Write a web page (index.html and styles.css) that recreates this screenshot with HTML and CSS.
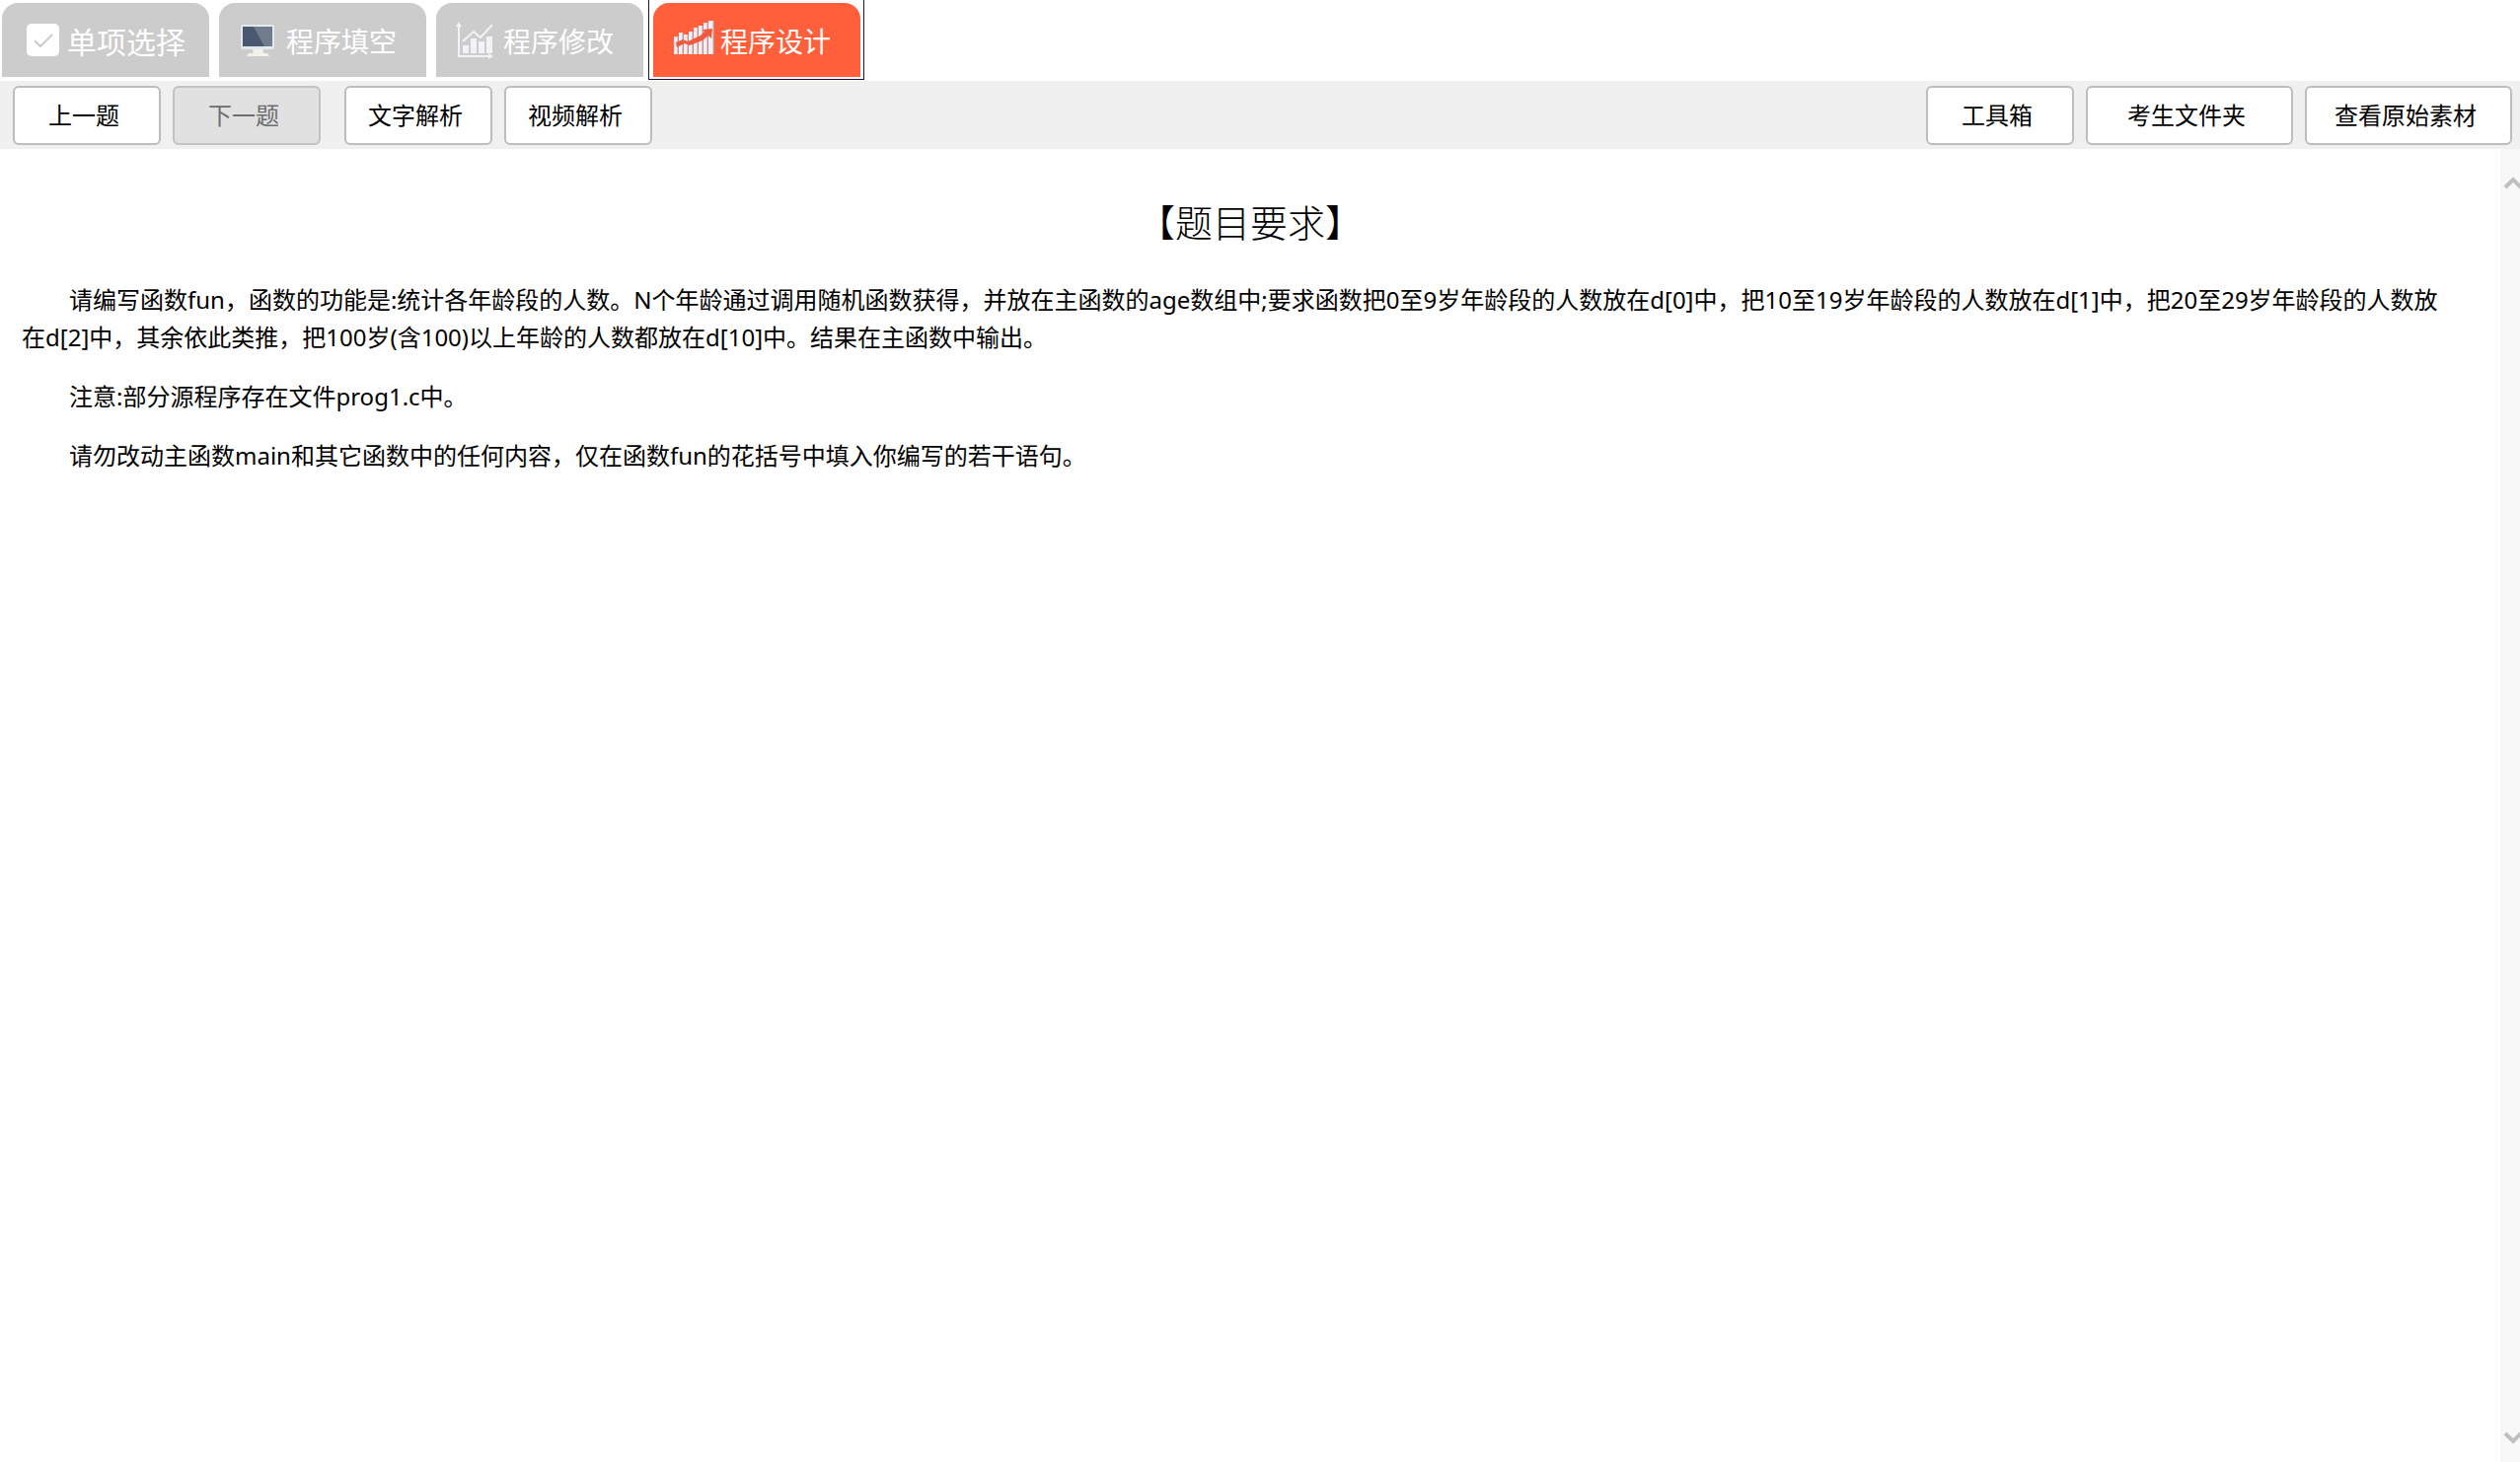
FILE: index.html
```html
<!DOCTYPE html>
<html lang="zh-CN">
<head>
<meta charset="utf-8">
<meta name="viewport" content="width=device-width, initial-scale=1">
<title>程序设计</title>
<link rel="stylesheet" href="styles.css">
</head>
<body>
<nav class="tabs">
  <button class="tab tab-wide" type="button">
    <svg class="tab-icon" viewBox="0 0 42 42" aria-hidden="true"><rect x="5" y="4" width="33" height="33" rx="5" fill="#fff"/><path d="M13 21l6 6 12-12" fill="none" stroke="#ccc" stroke-width="2"/></svg>
    <span>单项选择</span>
  </button>
  <button class="tab" type="button">
    <svg class="tab-icon" viewBox="0 0 42 42" aria-hidden="true"><path d="M15 28h9l1 6h4l2 3H8l2-3h4z" fill="#f4f3ea"/><rect x="2" y="5" width="34" height="25" rx="2" fill="#e3eaee"/><rect x="4" y="7" width="30" height="20" fill="#4a5871"/><path d="M15 7h19v20h-8z" fill="#707b8d"/></svg>
    <span>程序填空</span>
  </button>
  <button class="tab" type="button">
    <svg class="tab-icon" viewBox="0 0 42 42" aria-hidden="true"><g fill="none" stroke="#f3f3f7" stroke-width="2"><path d="M3 5v32h33M7 22l11-10 7 6 12-13"/></g><path d="M3 2l3 5H0zM38 37l-5-3v6zM7 26h6v8H7zM15 19h6v15h-6zM23 22h6v12h-6zM31 17h6v17h-6z" fill="#f3f3f7"/></svg>
    <span>程序修改</span>
  </button>
  <button class="tab tab-active" type="button" aria-current="page">
    <svg class="tab-icon" viewBox="0 0 42 42" aria-hidden="true"><path d="M1 17h4v18H1zM6 13h4v22H6zM11 15h4v20h-4zM16 12h4v23h-4zM21 8h4v27h-4zM26 6h4v29h-4zM31 3h4v32h-4zM36 1h5v34h-5z" fill="#f1eff4"/><path d="M5 17v18M10 13v22M15 15v20M20 12v23M25 8v27M30 6v29M35 3v32M41 1v34" stroke="#b9a9bd" stroke-width="1"/><path d="M3 23l7-3 5 2 13-6 4-4-2-2 10-1-1 10-3-3-6 5-13 5-5-2-8 4z" fill="#ef5a3c"/></svg>
    <span>程序设计</span>
  </button>
</nav>
<header class="toolbar">
  <div class="group">
    <button class="btn" type="button">上一题</button>
    <button class="btn" type="button" disabled>下一题</button>
  </div>
  <div class="group">
    <button class="btn" type="button">文字解析</button>
    <button class="btn" type="button">视频解析</button>
  </div>
  <div class="group group-end">
    <button class="btn" type="button">工具箱</button>
    <button class="btn btn-wide" type="button">考生文件夹</button>
    <button class="btn btn-wide" type="button">查看原始素材</button>
  </div>
</header>
<div class="viewer">
  <main class="question">
    <h1>【题目要求】</h1>
    <p>请编写函数fun，函数的功能是:统计各年龄段的人数。N个年龄通过调用随机函数获得，并放在主函数的age数组中;要求函数把0至9岁年龄段的人数放在d[0]中，把10至19岁年龄段的人数放在d[1]中，把20至29岁年龄段的人数放在d[2]中，其余依此类推，把100岁(含100)以上年龄的人数都放在d[10]中。结果在主函数中输出。</p>
    <p>注意:部分源程序存在文件prog1.c中。</p>
    <p>请勿改动主函数main和其它函数中的任何内容，仅在函数fun的花括号中填入你编写的若干语句。</p>
  </main>
  <div class="scrollbar" aria-hidden="true">
    <svg viewBox="0 0 20 20"><path d="M5 16l8-8 8 8" fill="none" stroke="#bfbfbf" stroke-width="4"/></svg>
    <svg viewBox="0 0 20 20"><path d="M5 5l8 8 8-8" fill="none" stroke="#bfbfbf" stroke-width="4"/></svg>
  </div>
</div>
</body>
</html>
```

FILE: styles.css
```css
* { box-sizing: border-box; }
body {
  margin: 0;
  min-height: 100vh;
  display: flex;
  flex-direction: column;
  background: #fff;
  color: #000;
  font-family: "Noto Sans", "Noto Sans CJK SC", sans-serif;
  font-size: 24px;
}
button { font-family: "Noto Sans CJK SC", sans-serif; }
.tabs {
  display: flex;
  gap: 10px;
  height: 82px;
  padding: 3px 2px 4px;
}
.tab {
  position: relative;
  display: flex;
  align-items: center;
  gap: 6px;
  width: 210px;
  padding: 0 0 0 20px;
  border: 0;
  border-radius: 16px 16px 0 0;
  background: #ccc;
  color: #fff;
  font-size: 28px;
  white-space: nowrap;
}
.tab-wide { gap: 4px; font-size: 30px; }
.tab-active { background: #ff603b; }
/* square focus ring around the current tab */
.tab-active::after {
  content: "";
  position: absolute;
  inset: -3px -4px -3px -5px;
  border: 1px solid #14144b;
  border-top: 0;
}
.tab-icon { width: 42px; height: 42px; flex: none; }
.toolbar {
  display: flex;
  gap: 24px;
  padding: 5px 8px 4px 13px;
  background: #f0f0f0;
}
.group { display: flex; gap: 12px; }
.group-end { margin-left: auto; }
.btn {
  width: 150px;
  height: 60px;
  padding: 0 6px 4px 0;
  border: 2px solid #bdbdbd;
  border-radius: 6px;
  background: #fff;
  color: #000;
  font-size: 24px;
}
.btn-wide { width: 210px; }
.btn:disabled { background: #e1e1e1; border-color: #c2c2c2; color: #6d6d6d; }
.viewer { flex: 1; display: flex; }
.question { flex: 1; padding: 44px 60px 0 22px; background: #fefefe; }
h1 {
  margin: 0 -38px 30px 0;
  font-size: 38px;
  line-height: 60px;
  font-weight: 300;
  text-align: center;
}
p { margin: 0 0 22px; line-height: 38px; text-indent: 2em; }
.scrollbar {
  display: flex;
  flex-direction: column;
  justify-content: space-between;
  width: 20px;
  padding: 23px 0 14px;
  background: #f8f8f8;
}
.scrollbar svg { width: 20px; height: 20px; }
```
